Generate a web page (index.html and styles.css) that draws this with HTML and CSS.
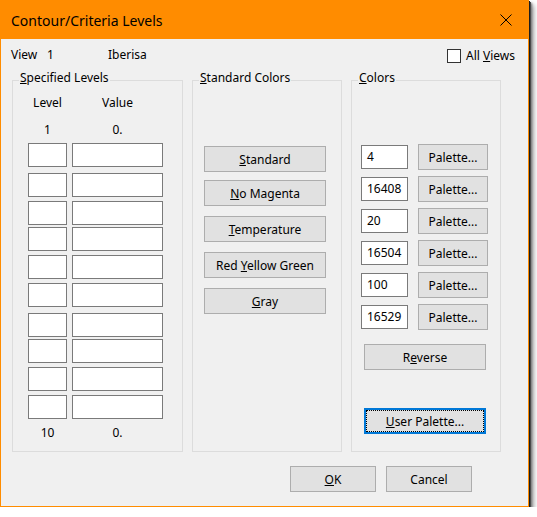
FILE: index.html
```html
<!DOCTYPE html>
<html>
<head>
<meta charset="utf-8">
<link rel="stylesheet" href="styles.css">
</head>
<body>
<div class="window">
  <div class="titlebar">
    <span class="title">Contour/Criteria Levels</span>
    <svg class="close" width="12" height="12" viewBox="0 0 12 12"><path d="M0.5 0.5 L11.5 11.5 M11.5 0.5 L0.5 11.5" stroke="#000" stroke-width="1" fill="none"/></svg>
  </div>
  <div class="client">
    <div class="toprow">
      <span class="view-label">View</span>
      <span class="view-num">1</span>
      <span class="view-name">Iberisa</span>
      <label class="allviews"><span class="checkbox"></span><span>All <u>V</u>iews</span></label>
    </div>
    <div class="groups">
      <fieldset class="group group-levels">
        <legend><u>S</u>pecified Levels</legend>
        <div class="levels">
          <div class="lv-head"><span>Level</span><span>Value</span></div>
          <div class="lv-head lv-first"><span>1</span><span>0.</span></div>
          <div class="lv-rows">
            <div class="lv-row"><span class="box"></span><span class="box"></span></div>
            <div class="lv-row"><span class="box"></span><span class="box"></span></div>
            <div class="lv-row"><span class="box"></span><span class="box"></span></div>
            <div class="lv-row"><span class="box"></span><span class="box"></span></div>
            <div class="lv-row"><span class="box"></span><span class="box"></span></div>
            <div class="lv-row"><span class="box"></span><span class="box"></span></div>
            <div class="lv-row"><span class="box"></span><span class="box"></span></div>
            <div class="lv-row"><span class="box"></span><span class="box"></span></div>
            <div class="lv-row"><span class="box"></span><span class="box"></span></div>
            <div class="lv-row"><span class="box"></span><span class="box"></span></div>
          </div>
          <div class="lv-head lv-last"><span>10</span><span>0.</span></div>
        </div>
      </fieldset>
      <fieldset class="group group-std">
        <legend><u>S</u>tandard Colors</legend>
        <div class="std">
          <button class="btn btn-std"><span><u>S</u>tandard</span></button>
          <button class="btn btn-std"><span><u>N</u>o Magenta</span></button>
          <button class="btn btn-std"><span><u>T</u>emperature</span></button>
          <button class="btn btn-std"><span>Red <u>Y</u>ellow Green</span></button>
          <button class="btn btn-std"><span><u>G</u>ray</span></button>
        </div>
      </fieldset>
      <fieldset class="group group-colors">
        <legend><u>C</u>olors</legend>
        <div class="colors">
          <div class="crow"><span class="cinput">4</span><button class="btn btn-pal">Palette...</button></div>
          <div class="crow"><span class="cinput">16408</span><button class="btn btn-pal">Palette...</button></div>
          <div class="crow"><span class="cinput">20</span><button class="btn btn-pal">Palette...</button></div>
          <div class="crow"><span class="cinput">16504</span><button class="btn btn-pal">Palette...</button></div>
          <div class="crow"><span class="cinput">100</span><button class="btn btn-pal">Palette...</button></div>
          <div class="crow"><span class="cinput">16529</span><button class="btn btn-pal">Palette...</button></div>
          <button class="btn btn-wide btn-reverse"><span>R<u>e</u>verse</span></button>
          <button class="btn btn-wide btn-user"><span><u>U</u>ser Palette...</span></button>
        </div>
      </fieldset>
    </div>
    <div class="footer">
      <button class="btn btn-foot"><span><u>O</u>K</span></button>
      <button class="btn btn-foot"><span>Cancel</span></button>
    </div>
  </div>
</div>
</body>
</html>
```
FILE: styles.css
```css
body {
  margin: 0;
  background: #ffffff;
  font-family: "Noto Sans", "Open Sans", sans-serif;
  font-size: 12px;
  color: #000;
}

.window {
  width: 529px;
  height: 507px;
  box-sizing: border-box;
  border: 1px solid #ff8c00;
  background: #f0f0f0;
  display: flex;
  flex-direction: column;
  box-shadow: 1px 1px 0 #1e1e1e, 2px 2px 0 #4a4a4a, 3px 3px 2px #777, 5px 5px 5px rgba(0, 0, 0, 0.35);
}

.titlebar {
  flex: none;
  height: 38px;
  background: #ff8c00;
  display: flex;
  align-items: center;
  padding: 0 16px 0 10px;
}

.title {
  flex: 1;
  font-size: 14px;
  color: #000;
}

.close {
  display: block;
}

.client {
  flex: 1;
  padding: 8px 10px 0 10px;
}

.toprow {
  display: flex;
  align-items: center;
  height: 16px;
  line-height: 16px;
}

.view-label {
  width: 36px;
}

.view-num {
  width: 61px;
}

.view-name {
  width: 339px;
}

.allviews {
  display: flex;
  align-items: center;
  gap: 5px;
  padding-top: 2px;
}

.checkbox {
  width: 14px;
  height: 14px;
  box-sizing: border-box;
  border: 1px solid #333;
  background: #fff;
}

.groups {
  display: flex;
  gap: 9px;
  margin: 7px 0 0 1px;
}

.group {
  margin: 0;
  padding: 0;
  min-width: 0;
  height: 382px;
  box-sizing: border-box;
  border: 1px solid #dcdcdc;
}

.group-levels {
  width: 171px;
}

.group-std,
.group-colors {
  width: 150px;
}

legend {
  margin-left: 6px;
  padding: 0 1px 4px 1px;
  line-height: 16px;
}

.levels {
  padding: 5px 0 0 15px;
}

.lv-head,
.lv-row {
  display: grid;
  grid-template-columns: 39px 91px;
  column-gap: 5px;
}

.lv-head {
  text-align: center;
  line-height: 16px;
}

.lv-first {
  margin-top: 11px;
}

.lv-rows {
  margin-top: 5px;
}

.lv-row {
  height: 24px;
}

.lv-row:nth-child(2) { margin-top: 6px; }
.lv-row:nth-child(3) { margin-top: 4px; }
.lv-row:nth-child(4) { margin-top: 2px; }
.lv-row:nth-child(5) { margin-top: 4px; }
.lv-row:nth-child(6) { margin-top: 4px; }
.lv-row:nth-child(7) { margin-top: 6px; }
.lv-row:nth-child(8) { margin-top: 2px; }
.lv-row:nth-child(9) { margin-top: 4px; }
.lv-row:nth-child(10) { margin-top: 4px; }

.lv-last {
  margin-top: 6px;
}

.box {
  height: 24px;
  box-sizing: border-box;
  border: 1px solid #7a7a7a;
  background: #fff;
}

.btn {
  box-sizing: border-box;
  height: 26px;
  margin: 0;
  padding: 0;
  border: 1px solid #adadad;
  background: #e1e1e1;
  font-family: inherit;
  font-size: 12px;
  color: #000;
  display: flex;
  align-items: center;
  justify-content: center;
}

.std {
  padding: 56px 0 0 11px;
  display: flex;
  flex-direction: column;
  gap: 10px;
}

.btn-std {
  width: 122px;
}

.btn-std:nth-child(2) {
  margin-top: -2px;
}

.colors {
  padding: 54px 0 0 9px;
  display: flex;
  flex-direction: column;
}

.crow {
  display: flex;
  align-items: center;
  gap: 10px;
  height: 26px;
}

.crow + .crow {
  margin-top: 6px;
}

.cinput {
  width: 47px;
  height: 24px;
  box-sizing: border-box;
  border: 1px solid #7a7a7a;
  background: #fff;
  padding-left: 5px;
  line-height: 22px;
}

.btn-pal {
  width: 70px;
}

.btn-wide {
  width: 122px;
  margin-left: 3px;
}

.btn-reverse {
  margin-top: 14px;
}

.btn-user {
  margin-top: 38px;
  border-color: #0078d7;
  box-shadow: inset 0 0 0 1px #0078d7;
  outline: 1px dotted #000;
  outline-offset: -3px;
}

.footer {
  display: flex;
  gap: 10px;
  margin-top: 14px;
  padding-left: 279px;
}

.btn-foot {
  width: 86px;
}
```
